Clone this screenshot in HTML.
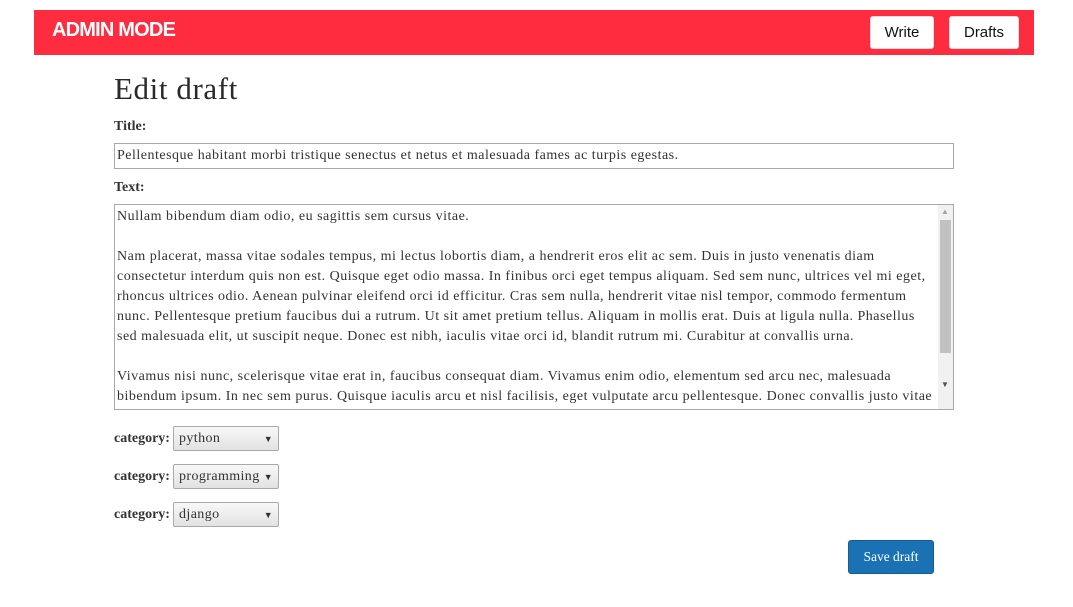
<!DOCTYPE html>
<html><head><style>
body{margin:0;background:#fff;font-family:"Liberation Serif",serif;color:#333;width:1073px;height:607px;position:relative;overflow:hidden}
.a{position:absolute}
.hdr{left:34px;top:10px;width:1000px;height:45px;background:#ff2c3f}
.logo{left:52px;top:19px;font:bold 20px "Liberation Sans",sans-serif;color:#fff;letter-spacing:-0.8px}
.btn{background:#fff;border:1px solid #ddd;border-radius:3px;font:15px "Liberation Sans",sans-serif;color:#111;display:flex;align-items:center;justify-content:center;box-sizing:border-box}
h1{position:absolute;left:114px;top:71px;margin:0;font-weight:normal;font-size:31px;color:#2a2a2a;letter-spacing:0.6px}
.lbl{font-weight:bold;font-size:14px;color:#333}
.box{border:1px solid #a9a9a9;box-sizing:border-box;background:#fff}
.ln{left:117px;font-size:14px;letter-spacing:0.5px;white-space:nowrap;color:#333;line-height:20px}
.sel{left:173px;width:106px;height:25px;border:1px solid #a9a9a9;border-radius:2px;box-sizing:border-box;background:linear-gradient(#f8f8f8,#e2e2e2);font-size:14px;letter-spacing:0.4px;padding:4px 0 0 5px;color:#333}
.sel:after{content:"▼";position:absolute;right:5px;top:7px;font-size:9px;color:#333}
.cl{left:114px;font-weight:bold;font-size:14px}
</style></head><body>
<div class="a hdr"></div>
<div class="a logo">ADMIN MODE</div>
<div class="a btn" style="left:870px;top:16px;width:64px;height:33px">Write</div>
<div class="a btn" style="left:949px;top:16px;width:70px;height:33px">Drafts</div>
<h1>Edit draft</h1>
<div class="a lbl" style="left:114px;top:119px">Title:</div>
<div class="a box" style="left:114px;top:143px;width:840px;height:26px"></div>
<div class="a ln" style="top:146px">Pellentesque habitant morbi tristique senectus et netus et malesuada fames ac turpis egestas.</div>
<div class="a lbl" style="left:114px;top:180px">Text:</div>
<div class="a box" style="left:114px;top:204px;width:840px;height:206px"></div>
<div class="a" style="left:938px;top:205px;width:15px;height:204px;background:#f1f1f1"></div>
<div class="a" style="left:940px;top:220px;width:11px;height:133px;background:#c1c1c1"></div>
<div class="a" style="left:941px;top:207px;font-size:8px;color:#a3a3a3">▲</div>
<div class="a" style="left:941px;top:380px;font-size:8px;color:#505050">▼</div>
<div class="a ln" style="top:207px">Nullam bibendum diam odio, eu sagittis sem cursus vitae.</div>
<div class="a ln" style="top:247px">Nam placerat, massa vitae sodales tempus, mi lectus lobortis diam, a hendrerit eros elit ac sem. Duis in justo venenatis diam</div>
<div class="a ln" style="top:267px">consectetur interdum quis non est. Quisque eget odio massa. In finibus orci eget tempus aliquam. Sed sem nunc, ultrices vel mi eget,</div>
<div class="a ln" style="top:287px">rhoncus ultrices odio. Aenean pulvinar eleifend orci id efficitur. Cras sem nulla, hendrerit vitae nisl tempor, commodo fermentum</div>
<div class="a ln" style="top:307px">nunc. Pellentesque pretium faucibus dui a rutrum. Ut sit amet pretium tellus. Aliquam in mollis erat. Duis at ligula nulla. Phasellus</div>
<div class="a ln" style="top:327px">sed malesuada elit, ut suscipit neque. Donec est nibh, iaculis vitae orci id, blandit rutrum mi. Curabitur at convallis urna.</div>
<div class="a ln" style="top:367px">Vivamus nisi nunc, scelerisque vitae erat in, faucibus consequat diam. Vivamus enim odio, elementum sed arcu nec, malesuada</div>
<div class="a ln" style="top:387px;width:819px;overflow:hidden">bibendum ipsum. In nec sem purus. Quisque iaculis arcu et nisl facilisis, eget vulputate arcu pellentesque. Donec convallis justo vitae</div>
<div class="a cl" style="top:431px">category:</div><div class="a sel" style="top:426px">python</div>
<div class="a cl" style="top:469px">category:</div><div class="a sel" style="top:464px">programming</div>
<div class="a cl" style="top:507px">category:</div><div class="a sel" style="top:502px">django</div>
<div class="a" style="left:848px;top:540px;width:86px;height:34px;background:#1a72b4;border:1px solid #155e94;box-sizing:border-box;border-radius:3px;color:#fff;font-size:13.5px;display:flex;align-items:center;justify-content:center">Save draft</div>
</body></html>
